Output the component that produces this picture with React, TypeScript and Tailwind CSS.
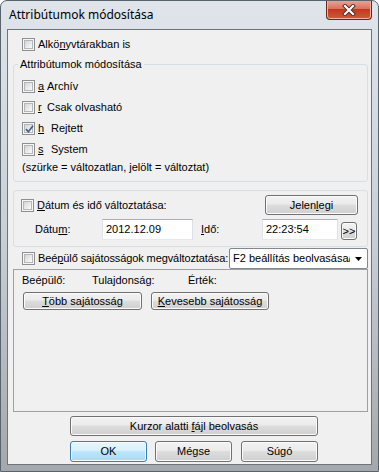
import React from 'react';

const CheckBox = ({ checked = false }: { checked?: boolean }) => (
  <span className="relative flex w-[13px] h-[13px] shrink-0 items-center justify-center border border-[#8f8f8f] bg-[#f6f6f6]">
    <span className="w-[9px] h-[9px] border border-[#b3b6ba] bg-gradient-to-br from-[#d2d5d9] to-[#fbfbfb]" />
    {checked && (
      <svg className="absolute left-[1px] top-[1px]" width="11" height="11" viewBox="0 0 11 11">
        <path d="M2 5.2 L4.4 7.8 L9 1.8" stroke="#4a5c82" strokeWidth="1.7" fill="none" />
      </svg>
    )}
  </span>
);

const Btn = ({
  children,
  className = '',
  def = false,
}: {
  children: React.ReactNode;
  className?: string;
  def?: boolean;
}) => (
  <div
    className={`flex shrink-0 items-center justify-center rounded-[3px] border text-[11px] leading-[13px] text-black ${
      def
        ? 'border-[#3c7fb1] bg-[linear-gradient(#eaf6fd_0%,#d9f0fc_45%,#bee6fd_50%,#a7d9f5_100%)] shadow-[inset_0_0_0_1px_#f4fbff]'
        : 'border-[#707070] bg-[linear-gradient(#f2f2f2_0%,#ebebeb_45%,#dddddd_50%,#cfcfcf_100%)] shadow-[inset_0_0_0_1px_#fbfbfb]'
    } ${className}`}
  >
    {children}
  </div>
);

const Field = ({ value, className = '' }: { value: string; className?: string }) => (
  <div
    className={`flex shrink-0 items-center border border-[#abadb3] border-b-[#e3e9ef] border-l-[#e2e3ea] border-r-[#dbdfe6] bg-white pl-[3px] ${className}`}
  >
    {value}
  </div>
);

const attrs = [
  { key: 'a', label: 'Archív', w: 'w-[8px]', checked: false },
  { key: 'r', label: 'Csak olvasható', w: 'w-[8px]', checked: false },
  { key: 'h', label: 'Rejtett', w: 'w-[12px]', checked: true },
  { key: 's', label: 'System', w: 'w-[12px]', checked: false },
];

export default function App() {
  return (
    <div className="w-[379px] h-[472px] flex flex-col overflow-hidden rounded-t-[7px] border border-[#59636d] bg-gradient-to-b from-[#dfe5eb] via-[#c8cfd6] to-[#a4a8ac] font-['Liberation_Sans',Arial,sans-serif] text-[11px] text-black">
      {/* title bar */}
      <div className="flex h-[28px] shrink-0 items-start justify-between">
        <div className="pl-[8px] pt-[6px] font-['Noto_Sans',sans-serif] text-[12px] leading-[16px]">
          Attribútumok módosítása
        </div>
        <div className="mr-[6px] -mt-[1px] flex h-[20px] w-[46px] items-center justify-center rounded-b-[4px] border border-t-0 border-[#6a2418] bg-[linear-gradient(#e9a99a_0%,#d8745f_45%,#c2391f_50%,#cf5a3b_100%)] shadow-[inset_0_0_0_1px_#f0b3a4]">
          <svg width="14" height="12" viewBox="0 0 14 12">
            <path d="M3 2 L11 10 M11 2 L3 10" stroke="#4a2a24" strokeWidth="4" strokeLinecap="square" />
            <path d="M3 2 L11 10 M11 2 L3 10" stroke="#ffffff" strokeWidth="2.2" strokeLinecap="square" />
          </svg>
        </div>
      </div>

      {/* client area */}
      <div className="mx-[6px] flex h-[436px] shrink-0 flex-col border border-[#6c757e] bg-[#f0f0f0]">
        <div className="mt-[8px] ml-[14px] flex h-[13px] items-center gap-[3px] leading-[13px]">
          <CheckBox />
          <span>
            Alkö<u className="underline-offset-[1px]">n</u>yvtárakban is
          </span>
        </div>

        <fieldset className="mt-[7px] ml-[5px] w-[355px] rounded-[3px] border border-[#d5dfe5] px-[8px] pb-[7px]">
          <legend className="-ml-[4px] px-[2px] leading-[13px]">Attribútumok módosítása</legend>
          <div className="mt-[9px] flex flex-col gap-[8px]">
            {attrs.map((a) => (
              <div key={a.key} className="flex h-[13px] items-center leading-[13px]">
                <CheckBox checked={a.checked} />
                <u className={`ml-[3px] ${a.w} underline-offset-[1px]`}>{a.key}</u>
                <span className="ml-[1px]">{a.label}</span>
              </div>
            ))}
          </div>
          <div className="mt-[5px] leading-[13px]">(szürke = változatlan, jelölt = változtat)</div>
        </fieldset>

        <div className="mt-[8px] ml-[5px] h-[57px] w-[355px] rounded-[3px] border border-[#d5dfe5] pt-[4px] pl-[7px] pr-[9px]">
          <div className="flex h-[20px] items-center justify-between">
            <div className="flex items-center gap-[3px]">
              <CheckBox />
              <span>
                <u className="underline-offset-[1px]">D</u>átum és idő változtatása:
              </span>
            </div>
            <Btn className="h-[20px] w-[93px]">
              <span>
                Jelen<u className="underline-offset-[1px]">l</u>egi
              </span>
            </Btn>
          </div>
          <div className="mt-[4px] flex h-[21px] items-center">
            <span className="ml-[14px] w-[67px]">
              Dátu<u className="underline-offset-[1px]">m</u>:
            </span>
            <Field value="2012.12.09" className="h-[21px] w-[91px]" />
            <span className="ml-[8px] w-[61px]">
              <u className="underline-offset-[1px]">I</u>dő:
            </span>
            <Field value="22:23:54" className="h-[21px] w-[76px]" />
            <Btn className="ml-[3px] mt-[3px] h-[18px] w-[16px] text-[10px]">&gt;&gt;</Btn>
          </div>
        </div>

        <div className="mt-[1px] ml-[14px] flex h-[21px] items-center">
          <CheckBox />
          <span className="ml-[3px] shrink-0 whitespace-nowrap tracking-[-0.1px]">
            Beé<u className="underline-offset-[1px]">p</u>ülő sajátosságok megváltoztatása:
          </span>
          <div className="ml-auto mr-[3px] flex h-[21px] w-[139px] shrink-0 items-center rounded-[2px] border border-[#828790] bg-white">
            <span className="flex-1 overflow-hidden whitespace-nowrap pl-[3px]">F2 beállítás beolvasása/(</span>
            <svg className="mx-[5px] shrink-0" width="7" height="4" viewBox="0 0 7 4">
              <path d="M0 0 L7 0 L3.5 4 Z" fill="#000" />
            </svg>
          </div>
        </div>

        <div className="ml-[5px] h-[143px] w-[355px] border border-[#a0a0a0] pt-[4px] pl-[8px]">
          <div className="flex leading-[13px]">
            <span className="w-[70px]">Beépülő:</span>
            <span className="w-[96px]">Tulajdonság:</span>
            <span>Érték:</span>
          </div>
          <div className="mt-[5px] flex">
            <Btn className="ml-[1px] h-[18px] w-[119px]">
              <span>
                <u className="underline-offset-[1px]">T</u>öbb sajátosság
              </span>
            </Btn>
            <Btn className="ml-[9px] h-[18px] w-[118px]">
              <span>
                <u className="underline-offset-[1px]">K</u>evesebb sajátosság
              </span>
            </Btn>
          </div>
        </div>

        <Btn className="mt-[4px] ml-[62px] h-[20px] w-[248px]">
          <span>
            Kurzor alatti <u className="underline-offset-[1px]">f</u>ájl beolvasás
          </span>
        </Btn>

        <div className="mt-[5px] ml-[62px] flex h-[21px]">
          <Btn def className="h-[21px] w-[77px]">OK</Btn>
          <Btn className="ml-[8px] h-[21px] w-[77px]">Mégse</Btn>
          <Btn className="ml-[9px] h-[21px] w-[77px]">Súgó</Btn>
        </div>
      </div>
    </div>
  );
}
